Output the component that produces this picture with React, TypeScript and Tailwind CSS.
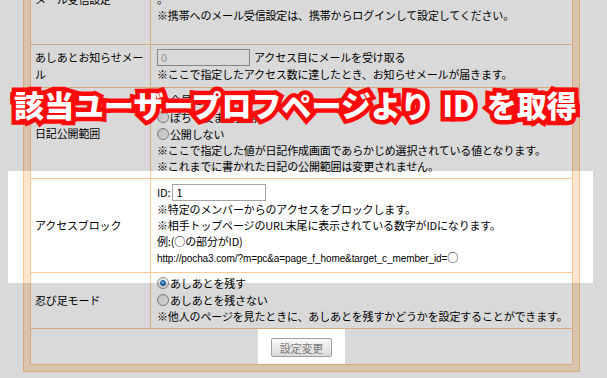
import React from "react";

function Radio({ checked = false }: { checked?: boolean }) {
  return (
    <span className="inline-flex h-[12px] w-[12px] shrink-0 items-center justify-center rounded-full border border-[#8e8f8f] bg-gradient-to-br from-[#dcdcdc] to-[#fbfbfb]">
      {checked && (
        <span className="h-[6px] w-[6px] rounded-full border border-[#0e4e8a] bg-gradient-to-br from-[#7fc1f5] to-[#1d6fc2]" />
      )}
    </span>
  );
}

function RadioLine({ label, checked = false }: { label: string; checked?: boolean }) {
  return (
    <div className="flex h-[17px] items-center gap-[1px] whitespace-nowrap">
      <Radio checked={checked} />
      <span>{label}</span>
    </div>
  );
}

function Line({ children }: { children: React.ReactNode }) {
  return <div className="h-[16px] whitespace-nowrap">{children}</div>;
}

function Row({
  label,
  children,
  className,
  last = false,
}: {
  label: React.ReactNode;
  children: React.ReactNode;
  className: string;
  last?: boolean;
}) {
  return (
    <div className={`flex ${last ? "" : "border-b border-[#fcc894]"}`}>
      <div className="flex w-[120px] shrink-0 items-center border-r border-[#fcc894] pl-[4px] leading-[17px]">
        {label}
      </div>
      <div className={`flex-1 pl-[6px] ${className}`}>{children}</div>
    </div>
  );
}

export default function App() {
  return (
    <div className="relative h-[378px] w-[607px] overflow-hidden bg-white font-['Noto_Sans_CJK_JP',sans-serif] text-[11px] leading-[16px] tracking-[-0.15px] text-black">
      <div className="ml-[23px] mt-[-54px] w-[557px] border border-[#fcc894] bg-[#ffe6cd] p-[6px]">
        <div className="border border-[#fcc894] bg-white">
          <Row label="メール受信設定" className="h-[90px] pt-[4px]">
            <RadioLine label="受信する" checked />
            <Line>※新着ページの通知などを登録されているメールアドレスにお知らせします</Line>
            <Line>。</Line>
            <Line>※携帯へのメール受信設定は、携帯からログインして設定してください。</Line>
          </Row>
          <Row
            label={
              <span>
                あしあとお知らせメー
                <br />
                ル
              </span>
            }
            className="h-[42px] pt-[3px]"
          >
            <div className="flex h-[18px] items-center whitespace-nowrap">
              <span className="flex h-[17px] w-[93px] items-center border border-[#9c9c9c] bg-white pl-[3px] text-[#a8a8a8]">
                0
              </span>
              <span className="ml-[4px]">アクセス目にメールを受け取る</span>
            </div>
            <Line>※ここで指定したアクセス数に達したとき、お知らせメールが届きます。</Line>
          </Row>
          <Row label="日記公開範囲" className="h-[90px] pt-[3px]">
            <RadioLine label="全員に公開" checked />
            <RadioLine label="ぽちゃ友まで公開" />
            <RadioLine label="公開しない" />
            <Line>※ここで指定した値が日記作成画面であらかじめ選択されている値となります。</Line>
            <Line>※これまでに書かれた日記の公開範囲は変更されません。</Line>
          </Row>
          <Row label="アクセスブロック" className="h-[93px] pt-[4px]">
            <div className="flex h-[18px] items-center whitespace-nowrap">
              <span>ID:</span>
              <span className="ml-[2px] flex h-[17px] w-[94px] items-center border border-[#a4a4a4] bg-white pl-[3px]">
                1
              </span>
            </div>
            <Line>※特定のメンバーからのアクセスをブロックします。</Line>
            <Line>※相手トップページのURL末尾に表示されている数字がIDになります。</Line>
            <Line>例:(○の部分がID)</Line>
            <Line>
              <span className="font-['Liberation_Sans',sans-serif] text-[10px] tracking-[-0.1px]">
                http://pocha3.com/?m=pc&amp;a=page_f_home&amp;target_c_member_id=
              </span>
              ○
            </Line>
          </Row>
          <Row label="忍び足モード" className="h-[55px] pt-[1px]">
            <RadioLine label="あしあとを残す" checked />
            <RadioLine label="あしあとを残さない" />
            <Line>※他人のページを見たときに、あしあとを残すかどうかを設定することができます。</Line>
          </Row>
          <div className="flex h-[35px] justify-center pt-[9px]">
            <button className="flex h-[19px] w-[61px] items-center justify-center rounded-[2px] border border-[#a0a0a0] bg-gradient-to-b from-[#fafafa] to-[#dadada] text-[11px] text-[#7a7a7a]">
              設定変更
            </button>
          </div>
        </div>
      </div>

      {/* dim overlay with two highlighted holes */}
      <div className="pointer-events-none absolute left-0 top-0 h-[171px] w-[607px] bg-black/[0.15]" />
      <div className="pointer-events-none absolute left-0 top-[171px] h-[112px] w-[8px] bg-black/[0.15]" />
      <div className="pointer-events-none absolute left-[593px] top-[171px] h-[112px] w-[14px] bg-black/[0.15]" />
      <div className="pointer-events-none absolute left-0 top-[283px] h-[46px] w-[607px] bg-black/[0.15]" />
      <div className="pointer-events-none absolute left-0 top-[329px] h-[35px] w-[258px] bg-black/[0.15]" />
      <div className="pointer-events-none absolute left-[345px] top-[329px] h-[35px] w-[262px] bg-black/[0.15]" />
      <div className="pointer-events-none absolute left-0 top-[364px] h-[14px] w-[607px] bg-black/[0.15]" />

      {/* banner */}
      <div className="pointer-events-none absolute left-[14px] top-[84px] grid whitespace-nowrap text-[30px] font-black leading-[40px] tracking-normal">
        <span className="col-start-1 row-start-1 text-[#ff0a0a] [-webkit-text-stroke:9px_#ff0a0a]">
          該当ユーザープロフページより<span className="mx-[12px]">ID</span>を取得
        </span>
        <span className="col-start-1 row-start-1 text-white">
          該当ユーザープロフページより<span className="mx-[12px]">ID</span>を取得
        </span>
      </div>
    </div>
  );
}
